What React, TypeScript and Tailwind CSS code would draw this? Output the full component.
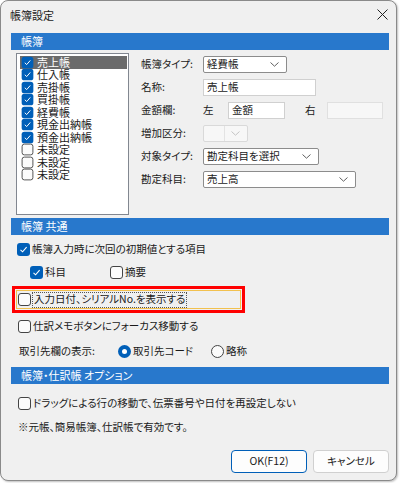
import React from "react";

const FONT = "font-['Noto_Sans_CJK_JP','Noto_Sans',sans-serif] [font-feature-settings:'palt'] text-[10.5px] leading-none text-[#1a1a1a]";

function Check({ checked }: { checked?: boolean }) {
  if (checked) {
    return (
      <span className="w-[13px] h-[13px] rounded-[3px] bg-[#005fb8] flex items-center justify-center shrink-0">
        <svg width="9" height="9" viewBox="0 0 9 9">
          <polyline points="1.5,4.8 3.6,6.8 7.6,2.2" fill="none" stroke="white" strokeWidth="1.1" />
        </svg>
      </span>
    );
  }
  return <span className="w-[13px] h-[13px] rounded-[3px] border border-[#444] bg-[#fbfbfb] shrink-0" />;
}

function Radio({ checked }: { checked?: boolean }) {
  if (checked) {
    return (
      <span className="w-[13px] h-[13px] rounded-full bg-[#005fb8] flex items-center justify-center shrink-0">
        <span className="w-[5px] h-[5px] rounded-full bg-white" />
      </span>
    );
  }
  return <span className="w-[13px] h-[13px] rounded-full border border-[#444] bg-[#fbfbfb] shrink-0" />;
}

function Chevron({ light }: { light?: boolean }) {
  return (
    <svg width="9" height="5" viewBox="0 0 9 5" className="shrink-0">
      <polyline points="0.5,0.5 4.5,4.2 8.5,0.5" fill="none" stroke={light ? "#c4c4c4" : "#606060"} strokeWidth="1" />
    </svg>
  );
}

function Select({ w, text, disabled }: { w: string; text?: string; disabled?: boolean }) {
  return (
    <div
      className={`${w} h-[17px] rounded-[2px] border flex items-center justify-between pl-[3px] pr-[7px] ${
        disabled ? "border-[#d9d9d9] bg-[#f7f7f7]" : "border-[#8c8c8c] bg-white"
      }`}
    >
      <span>{text}</span>
      {disabled ? (
        <div className="flex items-center h-full">
          <span className="w-px h-full bg-[#e3e3e3] mr-[6px]" />
          <Chevron light />
        </div>
      ) : (
        <Chevron />
      )}
    </div>
  );
}

function Input({ w, text, disabled }: { w: string; text?: string; disabled?: boolean }) {
  return (
    <div
      className={`${w} h-[17px] border flex items-center pl-[3px] ${
        disabled ? "border-[#e0e0e0] bg-[#f7f7f7]" : "border-[#d0d0d0] bg-white"
      }`}
    >
      {text}
    </div>
  );
}

function Header({ title }: { title: string }) {
  return (
    <div className="h-[17px] bg-[#2878cc] text-white flex items-center pl-[10px] text-[11px]">{title}</div>
  );
}

const listItems: [string, boolean][] = [
  ["売上帳", true],
  ["仕入帳", true],
  ["売掛帳", true],
  ["買掛帳", true],
  ["経費帳", true],
  ["現金出納帳", true],
  ["預金出納帳", true],
  ["未設定", false],
  ["未設定", false],
  ["未設定", false],
];

function FormRow({ label, children }: { label: string; children: React.ReactNode }) {
  return (
    <div className="h-[23px] flex items-center">
      <span className="w-[62px] shrink-0">{label}</span>
      {children}
    </div>
  );
}

export default function App() {
  return (
    <div className={`w-[400px] h-[483px] bg-white ${FONT}`}>
      <div className="w-[397px] h-[481px] border border-[#8a8a8a] rounded-[8px] bg-[#f0f0f0] flex flex-col shadow-[1px_1px_2px_rgba(0,0,0,0.25)]">
        {/* title */}
        <div className="h-[32px] flex items-start justify-between pl-[9px] pr-[6px] pt-[9px]">
          <span className="text-[11px]">帳簿設定</span>
          <svg width="11" height="11" viewBox="0 0 11 11" className="mt-[-1px] mr-[2px]">
            <path d="M0.5 0.5 L10.5 10.5 M10.5 0.5 L0.5 10.5" stroke="#222" strokeWidth="1" />
          </svg>
        </div>

        <div className="flex flex-col pl-[10px] pr-[7px]">
          <Header title="帳簿" />
          <div className="flex mt-[3px]">
            <div className="ml-[5px] w-[113px] h-[162px] bg-white border border-[#828790] pt-[2px] pl-[3px] pr-[1px]">
              {listItems.map(([name, c], i) => (
                <div
                  key={i}
                  className={`h-[12.5px] flex items-center gap-[3px] pl-[1px] text-[11px] ${i === 0 ? "bg-[#6b6b6b] text-white" : ""}`}
                >
                  <span className="scale-[0.9] flex">
                    <Check checked={c} />
                  </span>
                  <span>{name}</span>
                </div>
              ))}
            </div>
            <div className="ml-[12px] flex flex-col">
              <FormRow label="帳簿タイプ:">
                <Select w="w-[84px]" text="経費帳" />
              </FormRow>
              <FormRow label="名称:">
                <Input w="w-[113px]" text="売上帳" />
              </FormRow>
              <FormRow label="金額欄:">
                <span className="w-[25px]">左</span>
                <Input w="w-[57px]" text="金額" />
                <span className="ml-[20px] w-[22px]">右</span>
                <Input w="w-[56px]" disabled />
              </FormRow>
              <FormRow label="増加区分:">
                <Select w="w-[45px]" disabled />
              </FormRow>
              <FormRow label="対象タイプ:">
                <Select w="w-[116px]" text="勘定科目を選択" />
              </FormRow>
              <FormRow label="勘定科目:">
                <Select w="w-[153px]" text="売上高" />
              </FormRow>
            </div>
          </div>

          <div className="mt-[3px]">
            <Header title="帳簿 共通" />
          </div>
          <div className="mt-[3px] h-[22px] flex items-center ml-[6px] gap-[2px]">
            <Check checked />
            <span>帳簿入力時に次回の初期値とする項目</span>
          </div>
          <div className="mt-[1px] h-[23px] flex items-center ml-[19px]">
            <div className="w-[80px] flex items-center gap-[2px]">
              <Check checked />
              <span>科目</span>
            </div>
            <div className="flex items-center gap-[2px]">
              <Check />
              <span>摘要</span>
            </div>
          </div>
          <div className="mt-[2px] ml-[1px] w-[233px] h-[27px] border-[3px] border-[#ff0000] p-px">
            <div className="w-full h-full border border-[#f2c14e] flex items-center pl-px gap-px">
              <Check />
              <span className="border border-dotted border-[#555] px-px h-[16px] flex items-center">
                入力日付、シリアルNo.を表示する
              </span>
            </div>
          </div>
          <div className="mt-[1px] h-[24px] flex items-center ml-[7px] gap-[2px]">
            <Check />
            <span>仕訳メモボタンにフォーカス移動する</span>
          </div>
          <div className="h-[26px] flex items-center ml-[8px]">
            <span className="w-[99px]">取引先欄の表示:</span>
            <div className="w-[93px] flex items-center gap-[2px]">
              <Radio checked />
              <span>取引先コード</span>
            </div>
            <div className="flex items-center gap-[2px]">
              <Radio />
              <span>略称</span>
            </div>
          </div>
          <div className="mt-[3px]">
            <Header title="帳簿・仕訳帳 オプション" />
          </div>
          <div className="mt-[7px] h-[24px] flex items-center ml-[7px] gap-[2px]">
            <Check />
            <span>ドラッグによる行の移動で、伝票番号や日付を再設定しない</span>
          </div>
          <div className="h-[24px] flex items-center ml-[7px]">
            <span>※元帳、簡易帳簿、仕訳帳で有効です。</span>
          </div>
          <div className="mt-[11px] flex justify-end gap-[6px]">
            <div className="w-[76px] h-[23px] rounded-[4px] border border-[#005fb8] bg-[#fdfdfd] flex items-center justify-center">
              OK(F12)
            </div>
            <div className="w-[76px] h-[23px] rounded-[4px] border border-[#d0d0d0] bg-[#fdfdfd] flex items-center justify-center">
              キャンセル
            </div>
          </div>
        </div>
      </div>
    </div>
  );
}
